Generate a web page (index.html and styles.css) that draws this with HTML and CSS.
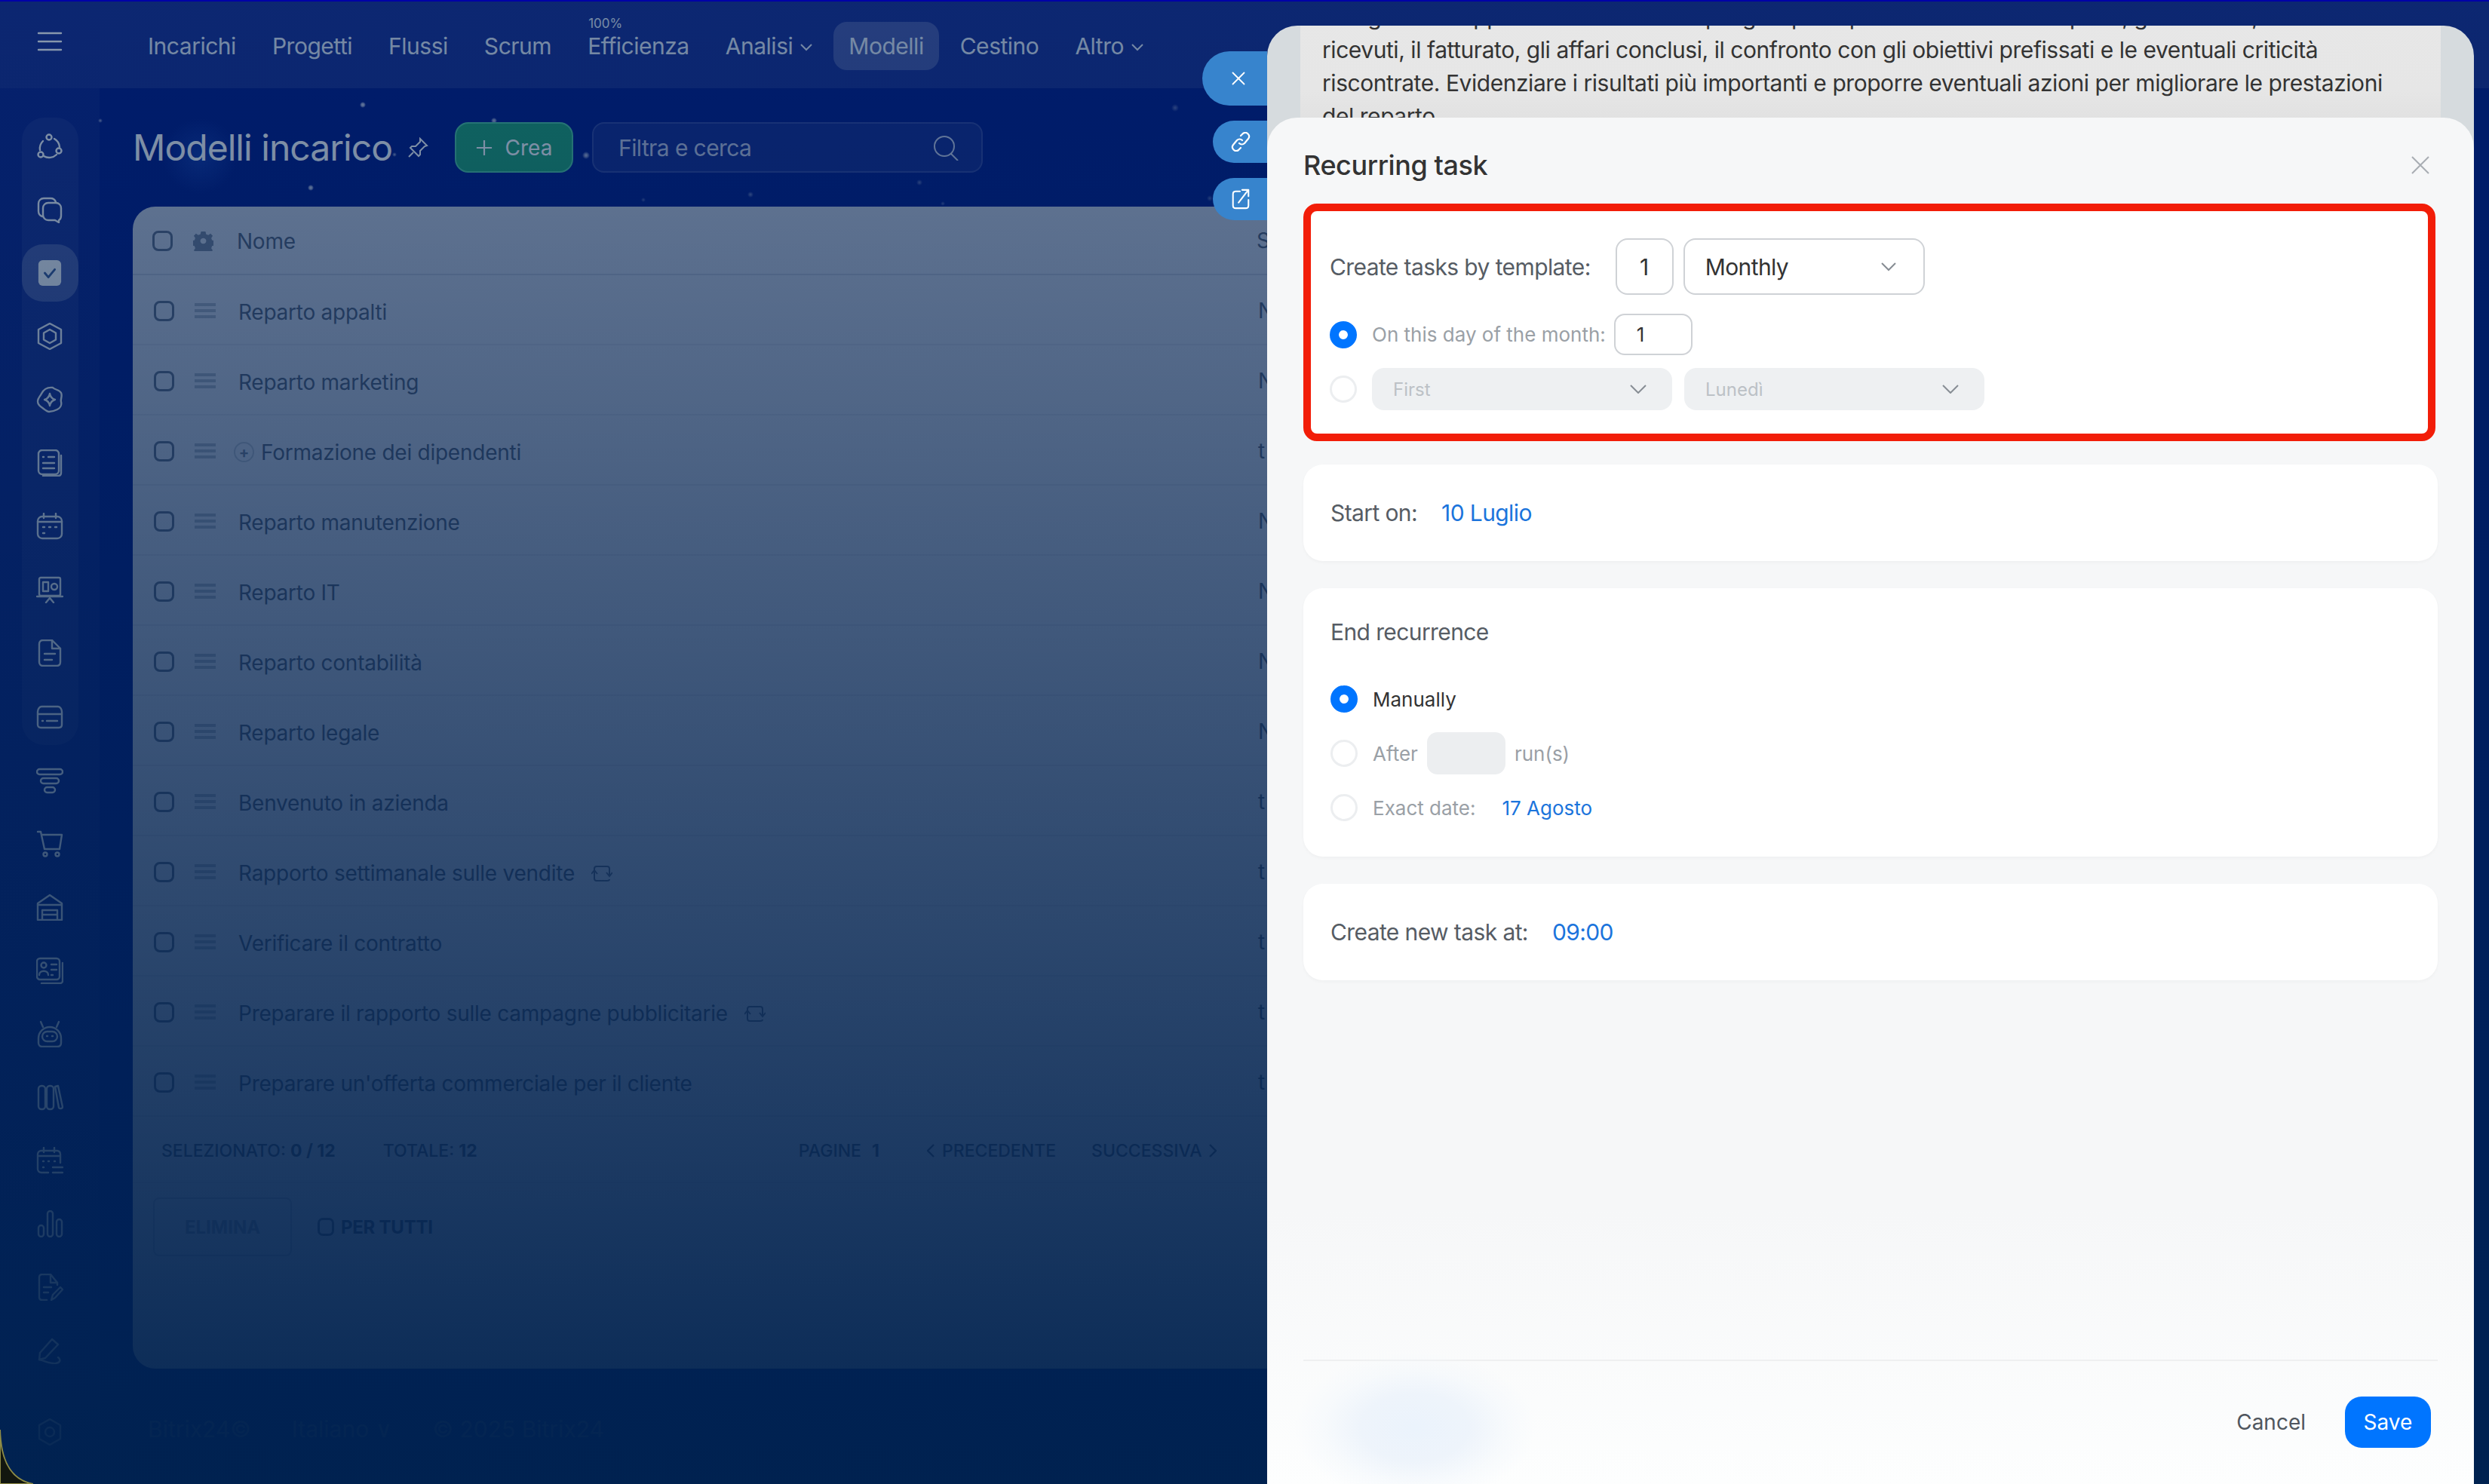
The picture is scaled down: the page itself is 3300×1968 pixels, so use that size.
FILE: index.html
```html
<!DOCTYPE html>
<html lang="en">
<head>
    <meta charset="UTF-8">
    <title>Modelli incarico</title>
    <link rel="stylesheet" href="styles.css">
</head>
<body>
<div class="app">
    <aside class="sidebar">
        <div class="menu-cell">
            <svg class="ico" viewBox="0 0 36 36"><path d="M3 7h30M3 18h30M3 29h30"/></svg>
        </div>
        <div class="side-group">
            <div class="side-item"><svg class="ico" viewBox="0 0 36 36"><circle cx="17" cy="6" r="3.5"/><circle cx="6" cy="29" r="3.5"/><circle cx="30" cy="24" r="3.5"/><path d="M9 11a14 14 0 0 0-4 12M24 8a14 14 0 0 1 7 11M10 31a14 14 0 0 0 17-2"/></svg></div>
            <div class="side-item"><svg class="ico" viewBox="0 0 36 36"><path d="M8 27c-3-1-5-3-5-7V10c0-4 3-7 7-7h9c4 0 6 2 7 5"/><path d="M16 9h10c4 0 7 3 7 7v10c0 3-1 5-3 6v3l-5-3h-9c-4 0-7-3-7-7V16c0-4 3-7 7-7z"/></svg></div>
            <div class="side-item active"><svg class="ico-check" viewBox="0 0 36 36"><rect x="2" y="0" width="32" height="36" rx="6"/><path d="M11 18l5 6 9-11"/></svg></div>
            <div class="side-item"><svg class="ico" viewBox="0 0 36 36"><path d="M18 1l15 8v18l-15 8-15-8V9z"/><path d="M18 9l8 4.500v9L18 27l-8-4.500v-9z"/></svg></div>
            <div class="side-item"><svg class="ico" viewBox="0 0 36 36"><path d="M22 2c3 3 9 3 11 7s-1 8 0 12-1 8-5 10-8 3-11 3-7-4-10-6-5-4-5-8 3-6 5-10 6-9 15-8z"/><path d="M18 10c1 5 3 7 7 8-4 1-6 3-7 8-1-5-3-7-7-8 4-1 6-3 7-8z"/></svg></div>
            <div class="side-item"><svg class="ico" viewBox="0 0 36 36"><rect x="3" y="1" width="27" height="32" rx="5"/><path d="M33 8v23c0 2-1 4-4 4H9"/><path d="M9 10h1M16 10h8M9 18h15M9 25h15"/></svg></div>
            <div class="side-item"><svg class="ico" viewBox="0 0 36 36"><rect x="2" y="5" width="32" height="29" rx="6"/><path d="M2 12h32M10 1v6M26 1v6M9 19h2M17 19h2M25 19h2M9 27h2"/></svg></div>
            <div class="side-item"><svg class="ico" viewBox="0 0 36 36"><rect x="4" y="2" width="28" height="24" rx="2"/><path d="M1 27h34M18 27v3M13 35l5-6 5 6"/><rect x="9" y="8" width="7" height="12"/><circle cx="24" cy="14" r="4"/></svg></div>
            <div class="side-item"><svg class="ico" viewBox="0 0 36 36"><path d="M9 1h12l11 11v18c0 3-2 5-5 5H9c-3 0-5-2-5-5V6c0-3 2-5 5-5z"/><path d="M21 1v11h11M11 19h14M11 27h10"/></svg></div>
            <div class="side-item"><svg class="ico" viewBox="0 0 36 36"><path d="M7 5h22c3 0 5 4 5 7v17c0 3-2 4-4 4H6c-2 0-4-1-4-4V12c0-3 2-7 5-7z"/><path d="M2 15h32M8 24h1M14 24h14"/></svg></div>
        </div>
        <div class="side-rest">
            <div class="side-item"><svg class="ico" viewBox="0 0 36 36"><rect x="1" y="3" width="34" height="7" rx="3.500"/><rect x="6" y="15" width="24" height="7" rx="3.500"/><rect x="11" y="27" width="14" height="7" rx="3.500"/></svg></div>
            <div class="side-item"><svg class="ico" viewBox="0 0 36 36"><path d="M2 2h4l5 23h20l3-19H7"/><circle cx="12" cy="32" r="2.500"/><circle cx="28" cy="32" r="2.500"/></svg></div>
            <div class="side-item"><svg class="ico" viewBox="0 0 36 36"><path d="M2 13L18 2l16 11v22H2z"/><path d="M2 15h32M8 22h20v13M8 35V22M8 28h20"/></svg></div>
            <div class="side-item"><svg class="ico" viewBox="0 0 36 36"><rect x="1" y="2" width="30" height="28" rx="4"/><path d="M35 8v24c0 1-1 3-3 3H7"/><circle cx="10" cy="11" r="3.500"/><path d="M4 24c0-7 12-7 12 0M20 10h7M20 17h7M20 24h2"/></svg></div>
            <div class="side-item"><svg class="ico" viewBox="0 0 36 36"><path d="M9 9L6 2M27 9l3-7"/><path d="M3 24a15 15 0 0 1 30 0v6c0 3-2 5-5 5H8c-3 0-5-2-5-5z"/><rect x="8" y="15" width="20" height="13" rx="6.500"/><path d="M14 21h1M21 21h1"/></svg></div>
            <div class="side-item"><svg class="ico" viewBox="0 0 36 36"><rect x="3" y="3" width="9" height="31" rx="4"/><rect x="14" y="3" width="9" height="31" rx="4"/><path d="M25 4l4-1 6 28c0 2-4 3-5 1z"/></svg></div>
            <div class="side-item"><svg class="ico" viewBox="0 0 36 36"><path d="M16 34H7c-3 0-5-2-5-5V10c0-3 2-5 5-5h20c3 0 5 2 5 5v11M2 12h30M10 1v6M24 1v6M9 19h1M16 19h1M24 19h1M9 27h1M22 27h13M22 34h13"/></svg></div>
            <div class="side-item"><svg class="ico" viewBox="0 0 36 36"><rect x="3" y="20" width="7" height="15" rx="3.500"/><rect x="15" y="1" width="7" height="34" rx="3.500"/><rect x="27" y="12" width="7" height="23" rx="3.500"/></svg></div>
            <div class="side-item"><svg class="ico" viewBox="0 0 36 36"><path d="M28 15v-3L19 1H8C5 1 4 3 4 5v26c0 2 1 4 4 4h6"/><path d="M19 1v11h9M10 18h10M10 25h6M20 35l2-7 10-10 3 3-10 11z"/></svg></div>
            <div class="side-item"><svg class="ico" viewBox="0 0 36 36"><path d="M4 30l1-9L21 3l8 7-17 18z"/><path d="M4 30c8 2 16 6 22 5 6-1 7-5 3-8"/></svg></div>
            <div class="side-item gear-low"><svg class="ico" viewBox="0 0 36 36"><path d="M18 1l14 8v18l-14 8-14-8V9z"/><circle cx="18" cy="18" r="6"/></svg></div>
        </div>
    </aside>

    <main class="main">
        <header class="topbar">
            <nav class="tabs">
                <a>Incarichi</a>
                <a>Progetti</a>
                <a>Flussi</a>
                <a>Scrum</a>
                <a class="has-badge">Efficienza<span class="badge">100%</span></a>
                <a>Analisi<svg class="caret" viewBox="0 0 16 10"><path d="M1 1l7 7 7-7"/></svg></a>
                <a class="active">Modelli</a>
                <a>Cestino</a>
                <a>Altro<svg class="caret" viewBox="0 0 16 10"><path d="M1 1l7 7 7-7"/></svg></a>
            </nav>
        </header>

        <div class="content">
            <div class="toolbar">
                <h1>Modelli incarico</h1>
                <svg class="pin" viewBox="0 0 28 28"><path d="M17 2l9 9-3 1-6 6 0 5-2 2-11-11 2-2 5 0 6-6z"/><path d="M8 20l-6 6"/></svg>
                <button class="create"><svg viewBox="0 0 24 24"><path d="M12 1v22M1 12h22"/></svg>Crea</button>
                <div class="search">
                    <span>Filtra e cerca</span>
                    <svg viewBox="0 0 34 34"><circle cx="15" cy="15" r="13"/><path d="M24 25l9 9"/></svg>
                </div>
            </div>

            <section class="table">
                <div class="row head">
                    <span class="check"></span>
                    <svg class="gear" viewBox="0 0 28 28"><path fill-rule="evenodd" d="M11 1h6l1 4 3 1 3-2 3 3-2 3 1 3 4 1v6l-4 1-1 3 2 3-3 3-3-2-3 1-1 4h-6l-1-4-3-1-3 2-3-3 2-3-1-3-4-1v-6l4-1 1-3-2-3 3-3 3 2 3-1zM14 10a4 4 0 1 0 .01 0z"/></svg>
                    <span class="name">Nome</span>
                    <span>S</span>
                </div>
                <div class="row"><span class="check"></span><span class="drag"></span><span class="name">Reparto appalti</span><span>N</span></div>
                <div class="row"><span class="check"></span><span class="drag"></span><span class="name">Reparto marketing</span><span>N</span></div>
                <div class="row"><span class="check"></span><span class="drag"></span><span class="name with-plus"><span class="plus">+</span>Formazione dei dipendenti</span><span>t</span></div>
                <div class="row"><span class="check"></span><span class="drag"></span><span class="name">Reparto manutenzione</span><span>N</span></div>
                <div class="row"><span class="check"></span><span class="drag"></span><span class="name">Reparto IT</span><span>N</span></div>
                <div class="row"><span class="check"></span><span class="drag"></span><span class="name">Reparto contabilità</span><span>N</span></div>
                <div class="row"><span class="check"></span><span class="drag"></span><span class="name">Reparto legale</span><span>N</span></div>
                <div class="row"><span class="check"></span><span class="drag"></span><span class="name">Benvenuto in azienda</span><span>t</span></div>
                <div class="row"><span class="check"></span><span class="drag"></span><span class="name">Rapporto settimanale sulle vendite<svg class="repeat" viewBox="0 0 28 28"><path d="M4 11V8c0-2 1-3 3-3h14c2 0 3 1 3 3v8M20 13l4 5 4-5M24 22c0 1-1 2-3 2H7c-2 0-3-1-3-3v-9M0 15l4-5 4 5"/></svg></span><span>t</span></div>
                <div class="row"><span class="check"></span><span class="drag"></span><span class="name">Verificare il contratto</span><span>t</span></div>
                <div class="row"><span class="check"></span><span class="drag"></span><span class="name">Preparare il rapporto sulle campagne pubblicitarie<svg class="repeat" viewBox="0 0 28 28"><path d="M4 11V8c0-2 1-3 3-3h14c2 0 3 1 3 3v8M20 13l4 5 4-5M24 22c0 1-1 2-3 2H7c-2 0-3-1-3-3v-9M0 15l4-5 4 5"/></svg></span><span>t</span></div>
                <div class="row"><span class="check"></span><span class="drag"></span><span class="name">Preparare un'offerta commerciale per il cliente</span><span>t</span></div>

                <div class="table-info">
                    <span class="sel">SELEZIONATO: <b>0 / 12</b></span>
                    <span class="tot">TOTALE: <b>12</b></span>
                    <span class="pages">PAGINE <b>1</b></span>
                    <span class="prev"><svg viewBox="0 0 10 18"><path d="M9 1L1 9l8 8"/></svg>PRECEDENTE</span>
                    <span class="next">SUCCESSIVA<svg viewBox="0 0 10 18"><path d="M1 1l8 8-8 8"/></svg></span>
                </div>
                <div class="table-actions">
                    <button class="del">ELIMINA</button>
                    <span class="check small"></span>
                    <b>PER TUTTI</b>
                </div>
            </section>

            <footer class="page-foot">
                <span>Bitrix24©</span>
                <span>Italiano ∨</span>
                <span>© 2025 Bitrix24</span>
            </footer>
        </div>
    </main>

    <div class="scrim"></div>

    <svg class="corner" viewBox="0 0 44 72"><path d="M0 0C1 38 12 66 44 72H0z"/></svg>

    <!-- slider stack over the page -->
    <div class="slider">
        <div class="side-btn close"><svg viewBox="0 0 24 24"><path d="M3 3l18 18M21 3L3 21"/></svg></div>
        <div class="side-btn link"><svg viewBox="0 0 26 26"><path d="M11 15a5 5 0 0 0 7 0l5-6a5 5 0 0 0-7-7l-3 3"/><path d="M15 11a5 5 0 0 0-7 0l-5 6a5 5 0 0 0 7 7l3-3"/></svg></div>
        <div class="side-btn open"><svg viewBox="0 0 26 30"><path d="M12 4H6C3 4 2 6 2 8v16c0 3 1 4 4 4h14c3 0 4-1 4-4v-8"/><path d="M10 20L23 3M15 2h9v9"/></svg></div>

        <div class="back">
            <div class="back-text">
                <p>Redigere un rapporto mensile che riepiloghi i principali dati: i contatti acquisiti, gli incarichi,</p>
                <p>ricevuti, il fatturato, gli affari conclusi, il confronto con gli obiettivi prefissati e le eventuali criticità</p>
                <p>riscontrate. Evidenziare i risultati più importanti e proporre eventuali azioni per migliorare le prestazioni</p>
                <p>del reparto</p>
            </div>
        </div>

        <div class="sheet">
            <div class="sheet-head">
                <h2>Recurring task</h2>
                <svg class="sheet-close" viewBox="0 0 24 24"><path d="M1 1l22 22M23 1L1 23"/></svg>
            </div>

            <div class="sheet-body">
                <div class="marked">
                    <div class="line line-main">
                        <span class="lbl">Create tasks by template:</span>
                        <div class="field num">1</div>
                        <div class="field select">Monthly<svg viewBox="0 0 20 12"><path d="M1 1l9 9 9-9"/></svg></div>
                    </div>
                    <div class="line line-day">
                        <span class="radio on"></span>
                        <span class="small-lbl">On this day of the month:</span>
                        <div class="field day">1</div>
                    </div>
                    <div class="line line-week">
                        <span class="radio"></span>
                        <div class="field off wide">First<svg viewBox="0 0 22 12"><path d="M1 1l10 10 10-10"/></svg></div>
                        <div class="field off wide">Lunedì<svg viewBox="0 0 22 12"><path d="M1 1l10 10 10-10"/></svg></div>
                    </div>
                </div>

                <div class="card single">
                    <span class="lbl">Start on:</span>
                    <a class="val">10 Luglio</a>
                </div>

                <div class="card end">
                    <div class="lbl end-title">End recurrence</div>
                    <div class="opt"><span class="radio on"></span><span class="small-lbl dark">Manually</span></div>
                    <div class="opt opt-after"><span class="radio"></span><span class="small-lbl">After</span><div class="runs"></div><span class="small-lbl">run(s)</span></div>
                    <div class="opt opt-date"><span class="radio"></span><span class="small-lbl">Exact date:</span><a class="val small">17 Agosto</a></div>
                </div>

                <div class="card single">
                    <span class="lbl">Create new task at:</span>
                    <a class="val">09:00</a>
                </div>
            </div>

            <div class="sheet-foot">
                <span class="cancel">Cancel</span>
                <button class="save">Save</button>
            </div>
            <div class="blob"></div>
        </div>
    </div>
</div>
</body>
</html>
```

FILE: styles.css
```css
* {
    box-sizing: border-box;
}

html, body {
    margin: 0;
    padding: 0;
    width: 3300px;
    height: 1968px;
    overflow: hidden;
    font-family: Inter, "Noto Sans", sans-serif;
}

button {
    font-family: inherit;
}

.app {
    position: relative;
    display: flex;
    width: 3300px;
    height: 1968px;
    overflow: hidden;
    border-top: 2px solid #0000a8;
    background-color: #001684;
    background-image:
        radial-gradient(circle at 481px 137px, rgba(255, 255, 255, .8) 0, rgba(255, 255, 255, .6) 2px, transparent 4px),
        radial-gradient(circle at 655px 158px, rgba(255, 255, 255, .7) 0, rgba(255, 255, 255, .5) 2px, transparent 4px),
        radial-gradient(circle at 412px 247px, rgba(255, 255, 255, .8) 0, rgba(255, 255, 255, .6) 2px, transparent 4px),
        radial-gradient(circle at 777px 204px, rgba(255, 255, 255, .7) 0, rgba(255, 255, 255, .5) 2px, transparent 5px),
        radial-gradient(circle at 133px 158px, rgba(255, 255, 255, .6) 0, transparent 3px),
        radial-gradient(circle at 523px 203px, rgba(255, 255, 255, .6) 0, transparent 3px),
        radial-gradient(circle at 853px 263px, rgba(255, 255, 255, .3) 0, transparent 3px),
        radial-gradient(circle at 995px 256px, rgba(255, 255, 255, .4) 0, transparent 4px),
        radial-gradient(circle at 1219px 240px, rgba(255, 255, 255, .35) 0, transparent 4px),
        radial-gradient(circle at 1558px 141px, rgba(255, 255, 255, .35) 0, transparent 5px),
        radial-gradient(circle at 1250px 268px, rgba(255, 255, 255, .3) 0, transparent 3px),
        radial-gradient(circle at 1604px 261px, rgba(255, 255, 255, .3) 0, transparent 4px),
        radial-gradient(circle at 265px 205px, rgba(60, 130, 255, .25) 0, transparent 50px);
}

/* sidebar */
.sidebar {
    flex: 0 0 132px;
    display: flex;
    flex-direction: column;
    align-items: center;
    background: rgba(255, 255, 255, .04);
}

.menu-cell {
    flex: 0 0 115px;
    width: 132px;
    display: flex;
    align-items: center;
    justify-content: center;
    padding-bottom: 10px;
    background: rgba(255, 255, 255, .05);
}

.side-group {
    display: flex;
    flex-direction: column;
    gap: 8px;
    width: 75px;
    margin-top: 39px;
    background: rgba(255, 255, 255, .06);
    border-radius: 30px;
}

.side-rest {
    display: flex;
    flex-direction: column;
    gap: 8px;
    width: 75px;
    margin-top: 9px;
}

.side-item {
    flex: 0 0 76px;
    display: flex;
    align-items: center;
    justify-content: center;
}

.side-item.active {
    background: rgba(255, 255, 255, .22);
    border-radius: 28px;
}

.side-item.gear-low {
    margin-top: 24px;
}

.ico {
    width: 36px;
    height: 36px;
    fill: none;
    stroke: #fff;
    stroke-width: 2.4;
    stroke-linecap: round;
    stroke-linejoin: round;
}

.ico-check {
    width: 34px;
    height: 34px;
}

.ico-check rect {
    fill: #fff;
}

.ico-check path {
    fill: none;
    stroke: #3c5a96;
    stroke-width: 3;
    stroke-linecap: round;
    stroke-linejoin: round;
}

/* main column */
.main {
    flex: 1;
    min-width: 0;
    display: flex;
    flex-direction: column;
}

.topbar {
    flex: 0 0 115px;
    background: rgba(255, 255, 255, .09);
    padding-left: 64px;
}

.tabs {
    display: flex;
    align-items: center;
    gap: 48px;
    height: 115px;
    padding-top: 3px;
    font-size: 30px;
    letter-spacing: -.016em;
    color: #dfe5f1;
}

.tabs a {
    display: flex;
    align-items: center;
    height: 64px;
    white-space: nowrap;
}

.tabs a.active {
    padding: 0 20px;
    margin: 0 -20px;
    background: rgba(255, 255, 255, .2);
    border-radius: 18px;
}

.has-badge {
    position: relative;
}

.badge {
    position: absolute;
    left: 1px;
    top: -8px;
    font-size: 17px;
    letter-spacing: 0;
}

.caret {
    width: 16px;
    height: 10px;
    margin-left: 10px;
    margin-top: 4px;
    fill: none;
    stroke: #dfe5f1;
    stroke-width: 2;
}

.content {
    padding-left: 44px;
}

.toolbar {
    display: flex;
    align-items: center;
    height: 67px;
    margin: 45px 0;
}

h1 {
    margin: 0;
    font-size: 48px;
    font-weight: 400;
    letter-spacing: -.02em;
    color: #fff;
    white-space: nowrap;
}

.pin {
    width: 28px;
    height: 28px;
    margin-left: 20px;
    fill: none;
    stroke: #fff;
    stroke-width: 2;
}

.create {
    width: 157px;
    height: 67px;
    margin-left: 35px;
    display: flex;
    align-items: center;
    justify-content: center;
    gap: 17px;
    background: #1ea070;
    border: 2px solid #4cc49a;
    border-radius: 18px;
    color: #fff;
    font-size: 28px;
}

.create svg {
    width: 22px;
    height: 22px;
    fill: none;
    stroke: #fff;
    stroke-width: 2.4;
}

.search {
    width: 518px;
    height: 67px;
    margin-left: 25px;
    padding: 0 30px 0 33px;
    display: flex;
    align-items: center;
    justify-content: space-between;
    background: rgba(255, 255, 255, .07);
    border: 2px solid rgba(255, 255, 255, .13);
    border-radius: 16px;
    font-size: 30px;
    letter-spacing: -.02em;
    color: rgba(255, 255, 255, .72);
}

.search svg {
    width: 34px;
    height: 34px;
    fill: none;
    stroke: rgba(255, 255, 255, .75);
    stroke-width: 2;
}

/* table */
.table {
    width: 3070px;
    height: 1541px;
    background: #c6cad8;
    border-radius: 30px;
    color: #4f5a72;
    font-size: 28px;
    letter-spacing: -.009em;
}

.row {
    display: grid;
    grid-template-columns: 54px 58px 1352px auto;
    align-items: center;
    height: 93px;
    padding: 3px 0 0 28px;
    border-bottom: 2px solid rgba(40, 60, 100, .07);
}

.row.head {
    height: 91px;
    padding: 1px 0 0 26px;
    border-bottom-color: rgba(40, 60, 100, .14);
}

.check {
    width: 27px;
    height: 27px;
    border: 3px solid #5a667f;
    border-radius: 8px;
}

.gear {
    width: 27px;
    height: 27px;
    fill: #6f7a92;
}

.drag {
    width: 28px;
    height: 20px;
    background: repeating-linear-gradient(to bottom, #97a0b2 0, #97a0b2 4px, transparent 4px, transparent 8px);
}

.name {
    display: flex;
    align-items: center;
    padding-top: 3px;
    white-space: nowrap;
}

.head .name {
    padding-top: 1px;
}

.with-plus {
    margin-left: -6px;
}

.plus {
    width: 27px;
    height: 27px;
    margin-right: 9px;
    display: flex;
    align-items: center;
    justify-content: center;
    border: 2px solid #a2aabb;
    border-radius: 50%;
    font-size: 20px;
    font-weight: 700;
    color: #69738a;
}

.repeat {
    width: 28px;
    height: 28px;
    margin-left: 22px;
    fill: none;
    stroke: #5a667f;
    stroke-width: 2;
}

.table-info {
    display: flex;
    align-items: center;
    height: 88px;
    padding: 3px 0 0 38px;
    border-bottom: 2px solid rgba(40, 60, 100, .07);
    font-size: 23px;
    font-weight: 500;
    letter-spacing: 0;
}

.table-info .tot {
    margin-left: 63px;
}

.table-info .pages {
    margin-left: 426px;
}

.table-info .pages b {
    margin-left: 8px;
}

.table-info .prev,
.table-info .next {
    display: flex;
    align-items: center;
    gap: 10px;
}

.table-info .prev {
    margin-left: 63px;
}

.table-info .next {
    margin-left: 47px;
}

.table-info svg {
    width: 10px;
    height: 18px;
    fill: none;
    stroke: #4f5a72;
    stroke-width: 2.4;
}

.table-info b {
    font-weight: 700;
}

.table-actions {
    display: flex;
    align-items: center;
    padding: 19px 0 0 27px;
    font-size: 24px;
}

.del {
    width: 184px;
    height: 78px;
    background: transparent;
    border: 2px solid rgba(70, 85, 120, .25);
    border-radius: 8px;
    color: #8a93a8;
    font-size: 24px;
    font-weight: 700;
}

.check.small {
    width: 22px;
    height: 24px;
    margin: 0 9px 0 34px;
    border-radius: 7px;
}

.page-foot {
    display: flex;
    gap: 54px;
    padding: 62px 0 0 20px;
    font-size: 30px;
    color: #5c6c90;
}

/* dark veil over the page, the slider stays above it */
.scrim {
    position: absolute;
    left: 0;
    top: 0;
    width: 100%;
    height: 100%;
    background: linear-gradient(to bottom, rgba(0, 34, 79, .46) 0, rgba(0, 34, 79, .93) 1800px, rgba(0, 34, 79, .98) 100%);
}

.corner {
    position: absolute;
    left: 0;
    bottom: 0;
    width: 44px;
    height: 72px;
    fill: #12160f;
    stroke: #8f8c45;
    stroke-width: 2;
}

/* slider */
.slider {
    position: absolute;
    left: 1680px;
    top: 32px;
    width: 1600px;
    bottom: 0;
}

.side-btn {
    position: absolute;
    right: 100%;
    display: flex;
    align-items: center;
    justify-content: center;
    background: #3784cd;
}

.side-btn svg {
    fill: none;
    stroke: #fff;
    stroke-width: 2.2;
    stroke-linecap: round;
    stroke-linejoin: round;
}

.close {
    top: 34px;
    width: 86px;
    height: 72px;
    border-radius: 36px 0 0 36px;
    padding-left: 10px;
}

.close svg {
    width: 20px;
    height: 20px;
}

.link, .open {
    width: 72px;
    height: 56px;
    border-radius: 28px 0 0 28px;
    padding-left: 2px;
}

.link {
    top: 126px;
}

.link svg {
    width: 26px;
    height: 26px;
}

.open {
    top: 202px;
}

.open svg {
    width: 26px;
    height: 28px;
}

.back {
    height: 200px;
    padding: 0 44px;
    background: #d6dbde;
    border-radius: 40px 40px 0 0;
    overflow: hidden;
}

.back-text {
    height: 200px;
    padding: 0 29px;
    background: linear-gradient(to bottom, #e7e7e7 0, #e6e6e6 60%, #dcdcdc 100%);
    font-size: 30px;
    line-height: 44px;
    letter-spacing: -.015em;
    color: #333;
}

.back-text p {
    margin: 0;
    white-space: nowrap;
}

.back-text p:first-child {
    margin-top: -34px;
}

.sheet {
    position: absolute;
    left: 0;
    right: 0;
    top: 122px;
    bottom: 0;
    display: flex;
    flex-direction: column;
    padding: 0 48px;
    background: linear-gradient(to bottom, #f6f7f8 0, #f6f7f8 80%, #fdfefe 100%);
    border-radius: 40px 40px 0 0;
    overflow: hidden;
}

.sheet-head {
    flex: 0 0 114px;
    display: flex;
    align-items: center;
    justify-content: space-between;
    padding: 12px 11px 0 0;
}

h2 {
    margin: 0;
    font-size: 36px;
    font-weight: 500;
    letter-spacing: -.012em;
    color: #333;
}

.sheet-close {
    width: 24px;
    height: 24px;
    fill: none;
    stroke: #a8adb3;
    stroke-width: 2;
}

.sheet-body {
    flex: 1;
    display: flex;
    flex-direction: column;
}

.marked {
    flex: 0 0 315px;
    width: 1501px;
    margin-bottom: 31px;
    padding: 36px 0 0 25px;
    background: #fff;
    border: 10px solid #f21d08;
    border-radius: 18px;
}

.line {
    display: flex;
    align-items: center;
}

.line-main {
    height: 75px;
    margin-bottom: 25px;
}

.line-day {
    height: 55px;
    margin-bottom: 17px;
}

.line-week {
    height: 56px;
}

.lbl {
    font-size: 30px;
    letter-spacing: -.02em;
    color: #565c64;
    white-space: nowrap;
}

.small-lbl {
    font-size: 26px;
    color: #9aa0a6;
    white-space: nowrap;
}

.small-lbl.dark {
    color: #333;
}

.field {
    display: flex;
    align-items: center;
    background: #fff;
    border: 2px solid #cfd2d6;
    border-radius: 16px;
    color: #333;
}

.num {
    width: 77px;
    height: 75px;
    margin-left: 33px;
    justify-content: center;
    font-size: 30px;
}

.select {
    width: 320px;
    height: 75px;
    margin-left: 13px;
    padding: 0 36px 0 27px;
    justify-content: space-between;
    font-size: 30px;
    letter-spacing: -.02em;
}

.select svg {
    width: 20px;
    height: 12px;
    fill: none;
    stroke: #868c93;
    stroke-width: 2;
}

.day {
    width: 104px;
    height: 55px;
    margin-left: 11px;
    padding-left: 28px;
    font-size: 26px;
    border-radius: 14px;
}

.radio {
    flex: 0 0 36px;
    width: 36px;
    height: 36px;
    margin-right: 20px;
    background: #fff;
    border: 3px solid #eceef0;
    border-radius: 50%;
}

.radio.on {
    background: #fff;
    border: 12px solid #0075ff;
}

.field.off {
    background: #eef0f2;
    border: 0;
    border-radius: 16px;
    color: #bcc1c6;
}

.wide {
    width: 398px;
    height: 56px;
    margin-right: 16px;
    padding: 0 34px 0 28px;
    justify-content: space-between;
    font-size: 24px;
}

.wide svg {
    width: 22px;
    height: 12px;
    fill: none;
    stroke: #878d94;
    stroke-width: 2;
}

.card {
    background: #fff;
    border-radius: 26px;
    padding-left: 36px;
    box-shadow: 0 2px 4px rgba(0, 0, 0, .03);
}

.card.single {
    flex: 0 0 128px;
    display: flex;
    align-items: center;
    margin-bottom: 36px;
}

.val {
    margin-left: 32px;
    font-size: 30px;
    letter-spacing: -.02em;
    color: #1b74dc;
    white-space: nowrap;
}

.val.small {
    margin-left: 35px;
    font-size: 26px;
    letter-spacing: 0;
}

.card.end {
    flex: 0 0 356px;
    margin-bottom: 36px;
    padding-top: 40px;
}

.end-title {
    height: 36px;
    line-height: 36px;
    margin-bottom: 53px;
}

.opt {
    display: flex;
    align-items: center;
    height: 36px;
    margin-bottom: 36px;
}

.runs {
    width: 104px;
    height: 56px;
    margin: 0 12px;
    background: #eceef0;
    border-radius: 14px;
}

.sheet-foot {
    flex: 0 0 165px;
    display: flex;
    justify-content: flex-end;
    align-items: flex-start;
    gap: 52px;
    padding: 47px 9px 0 0;
    border-top: 2px solid #eff0f1;
}

.cancel {
    line-height: 68px;
    font-size: 28px;
    color: #50565e;
}

.save {
    width: 114px;
    height: 68px;
    background: #0075ff;
    border: 0;
    border-radius: 22px;
    color: #fff;
    font-size: 28px;
}

.blob {
    position: absolute;
    left: 36px;
    bottom: -25px;
    width: 320px;
    height: 200px;
    background: radial-gradient(closest-side, #ebf3fc 0, #eef4fb 45%, rgba(242, 247, 252, .5) 75%, rgba(248, 250, 252, 0) 100%);
    pointer-events: none;
}
```
